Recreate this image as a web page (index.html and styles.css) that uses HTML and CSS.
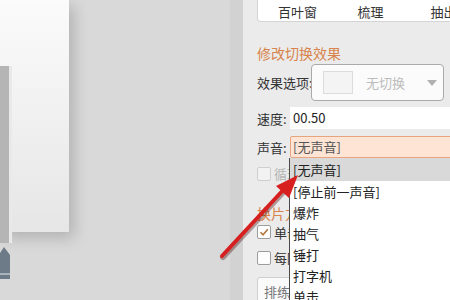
FILE: index.html
```html
<!DOCTYPE html>
<html lang="zh-CN">
<head>
    <meta charset="UTF-8">
    <meta name="viewport" content="width=device-width, initial-scale=1.0">
    <title>切换效果</title>
    <link rel="stylesheet" href="styles.css">
</head>
<body>

    <div class="screen">
        <!-- Slide canvas -->
        <div class="canvas">
            <div class="slide"></div>
            <div class="slide-back"></div>
            <svg class="thumb" width="10" height="32" viewBox="0 0 10 32">
                <polygon points="0,6 4,0 10,8 10,32 0,32" fill="#6d7b88"/>
                <rect x="0" y="26" width="10" height="2" fill="#a9b3bd"/>
            </svg>
        </div>
        <div class="divider"></div>

        <!-- Transition panel -->
        <div class="panel">
            <div class="tabs">
                <span class="tab">百叶窗</span>
                <span class="tab">梳理</span>
                <span class="tab">抽出</span>
            </div>

            <h3 class="section-title first">修改切换效果</h3>

            <div class="row row-effect">
                <span class="label">效果选项:</span>
                <div class="select">
                    <span class="swatch"></span>
                    <span class="select-text">无切换</span>
                    <span class="caret"></span>
                </div>
            </div>

            <div class="row row-speed">
                <span class="label short">速度:</span>
                <div class="input">00.50</div>
            </div>

            <div class="row row-sound">
                <span class="label short">声音:</span>
                <div class="input active">[无声音]</div>
            </div>

            <div class="row row-loop">
                <span class="check disabled"></span>
                <span class="check-text disabled">循环播放，到下一声音开始时</span>
            </div>

            <h3 class="section-title second">换片方式</h3>

            <div class="row row-click">
                <span class="check checked">
                    <svg width="12" height="12" viewBox="0 0 12 12"><path d="M2.5 6.2 L5 8.8 L9.8 3.2" fill="none" stroke="#b8763f" stroke-width="1.6"/></svg>
                </span>
                <span class="check-text">单击鼠标时换片</span>
            </div>

            <div class="row row-every">
                <span class="check"></span>
                <span class="check-text">每隔</span>
            </div>

            <div class="row row-btn">
                <div class="btn">排练计时</div>
            </div>

            <!-- Sound dropdown list -->
            <ul class="dropdown">
                <li class="selected">[无声音]</li>
                <li>[停止前一声音]</li>
                <li>爆炸</li>
                <li>抽气</li>
                <li>锤打</li>
                <li>打字机</li>
                <li>单击</li>
            </ul>
        </div>

        <!-- Red pointer arrow -->
        <svg class="arrow" width="450" height="300" viewBox="0 0 450 300">
            <line x1="223" y1="257" x2="287" y2="188" stroke="rgba(60,0,0,0.35)" stroke-width="6" stroke-linecap="round"/>
            <line x1="222" y1="256" x2="286" y2="187" stroke="#d71f1f" stroke-width="4" stroke-linecap="round"/>
            <polygon points="298,175 276,186 289,198" fill="#d71f1f"/>
        </svg>
    </div>

</body>
</html>
```

FILE: styles.css
```css
/* General */
body {
    margin: 0;
    padding: 0;
    font-family: "Noto Sans CJK SC", "Liberation Sans", sans-serif;
    font-size: 13px;
    color: #333;
}

.screen {
    position: relative;
    display: flex;
    width: 450px;
    height: 300px;
    overflow: hidden;
    background: #d9d9d9;
}

/* Slide canvas */
.canvas {
    position: relative;
    width: 230px;
    height: 300px;
    flex-shrink: 0;
}

.slide {
    width: 69px;
    height: 232px;
    background: linear-gradient(#fbfbfb, #e6e6e6);
    box-shadow: 5px 6px 14px rgba(0, 0, 0, 0.18);
}

.slide-back {
    position: absolute;
    left: 0;
    top: 66px;
    width: 9px;
    height: 177px;
    background: #b5b5b5;
    border-right: 3px solid #e9e9e9;
}

.thumb {
    position: absolute;
    left: 0;
    top: 247px;
}

.divider {
    width: 13px;
    flex-shrink: 0;
    background: #d2d2d2;
}

/* Panel */
.panel {
    position: relative;
    flex: 1;
    padding-left: 14px;
    background: #ebebeb;
}

.tabs {
    display: flex;
    width: 230px;
    height: 22px;
    padding-left: 3px;
    background: #fff;
    border: 1px solid #d4d4d4;
    border-top: none;
    border-radius: 0 0 4px 4px;
    box-sizing: border-box;
}

.tab {
    width: 73px;
    flex-shrink: 0;
    text-align: center;
    line-height: 23px;
    color: #333;
}

.section-title {
    margin: 0;
    height: 20px;
    line-height: 20px;
    font-size: 14px;
    font-weight: normal;
    color: #d8844c;
    white-space: nowrap;
}

.section-title.first {
    margin-top: 21px;
}

.section-title.second {
    margin-top: 22px;
}

.row {
    display: flex;
    align-items: center;
    white-space: nowrap;
}

.label {
    width: 54px;
    flex-shrink: 0;
}

.label.short {
    width: 33px;
}

.row-effect {
    margin-top: 1px;
    height: 37px;
}

.select {
    display: flex;
    align-items: center;
    width: 133px;
    height: 37px;
    box-sizing: border-box;
    padding-left: 11px;
    background: #fbfbfb;
    border: 1px solid #aaa;
    border-radius: 4px;
}

.swatch {
    width: 30px;
    height: 23px;
    box-sizing: border-box;
    background: #f4f4f4;
    border: 1px solid #dcdcdc;
}

.select-text {
    margin-left: 13px;
    color: #bcbcbc;
    flex: 1;
}

.caret {
    width: 0;
    height: 0;
    margin-right: 6px;
    border-left: 5px solid transparent;
    border-right: 5px solid transparent;
    border-top: 6px solid #b0b0b0;
}

.row-speed {
    margin-top: 6px;
    height: 22px;
}

.row-sound {
    margin-top: 7px;
    height: 22px;
}

.input {
    width: 170px;
    height: 22px;
    box-sizing: border-box;
    padding-left: 3px;
    line-height: 21px;
    background: #fff;
    color: #222;
}

.input.active {
    background: #fde4d5;
    border: 1px solid #e6a57f;
    border-radius: 2px;
    padding-left: 2px;
    line-height: 19px;
    color: #555;
}

.row-loop {
    margin-top: 8px;
    height: 15px;
}

.row-click {
    margin-top: 2px;
    height: 14px;
}

.row-every {
    margin-top: 11px;
    height: 15px;
}

.check {
    display: flex;
    align-items: center;
    justify-content: center;
    width: 14px;
    height: 14px;
    box-sizing: border-box;
    margin-right: 3px;
    background: #fdfdfd;
    border: 1px solid #9d9d9d;
    border-radius: 2px;
}

.check.disabled {
    border-color: #cfcfcf;
    background: #f2f2f2;
}

.check-text.disabled {
    color: #b5b5b5;
}

.row-btn {
    margin-top: 12px;
}

.btn {
    height: 28px;
    padding: 0 6px;
    line-height: 27px;
    box-sizing: border-box;
    background: #fafafa;
    border: 1px solid #cfcfcf;
    border-radius: 3px;
    color: #777;
}

/* Sound dropdown */
.dropdown {
    position: absolute;
    left: 46px;
    top: 158px;
    width: 170px;
    height: 150px;
    margin: 0;
    padding: 1px 0 0;
    list-style: none;
    background: #fff;
    border-left: 1px solid #4a4a4a;
}

.dropdown li {
    height: 21px;
    line-height: 21px;
    padding-left: 3px;
    color: #222;
}

.dropdown li.selected {
    background: #d9d9d9;
    margin-top: -1px;
    height: 23px;
    line-height: 23px;
}

/* Pointer arrow */
.arrow {
    position: absolute;
    left: 0;
    top: 0;
    pointer-events: none;
}
```
